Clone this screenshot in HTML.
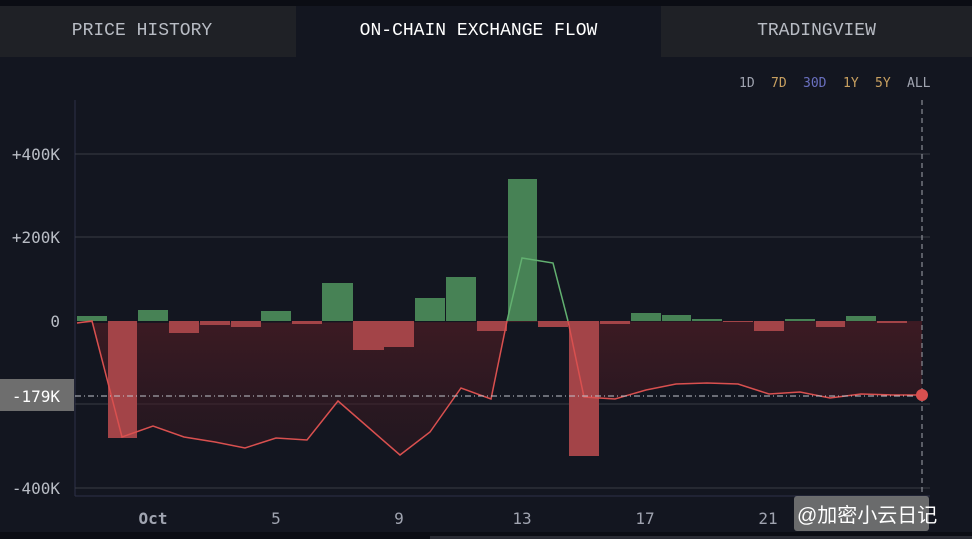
<!DOCTYPE html>
<html><head><style>
body{margin:0;width:972px;height:539px;background:#131620;overflow:hidden;font-family:"Liberation Mono","DejaVu Sans Mono",monospace;}
.tab{position:absolute;top:6px;height:51px;line-height:51px;text-align:center;font-size:18px;color:#b8bcc4;}
</style></head><body>
<div style="position:absolute;left:0;top:0;width:972px;height:6px;background:#0b0d14"></div>
<div class="tab" style="left:0;width:284px;background:#1f2126">PRICE HISTORY</div>
<div style="position:absolute;left:284px;top:6px;width:12px;height:51px;background:#1f2126"></div>
<div class="tab" style="left:296px;width:365px;background:#131620;color:#fff">ON-CHAIN EXCHANGE FLOW</div>
<div class="tab" style="left:661px;width:311px;background:#1f2126">TRADINGVIEW</div>
<svg width="972" height="539" style="position:absolute;left:0;top:0" font-family="DejaVu Sans Mono, Liberation Mono, monospace">
<defs><linearGradient id="g" x1="0" y1="321" x2="0" y2="460" gradientUnits="userSpaceOnUse"><stop offset="0" stop-color="#4a1c24" stop-opacity=".75"/><stop offset="1" stop-color="#3a1820" stop-opacity=".35"/></linearGradient></defs>
<g font-size="13" fill="#a0a4b0"><text x="739" y="87">1D</text><text x="771" y="87" fill="#c8a060">7D</text><text x="803" y="87" fill="#6a70c0">30D</text><text x="843" y="87" fill="#c8a060">1Y</text><text x="875" y="87" fill="#c8a060">5Y</text><text x="907" y="87">ALL</text></g>
<line x1="75" y1="100" x2="75" y2="496" stroke="#2c3048"/>
<line x1="75" y1="496" x2="930" y2="496" stroke="#2c3048"/>
<g stroke="#3a3c44"><line x1="75" y1="154" x2="930" y2="154"/><line x1="75" y1="237" x2="930" y2="237"/><line x1="75" y1="404" x2="930" y2="404"/><line x1="75" y1="488" x2="930" y2="488"/></g>
<g font-size="16" fill="#b8bcc4" text-anchor="end"><text x="60" y="160">+400K</text><text x="60" y="243">+200K</text><text x="60" y="327">0</text><text x="60" y="494">-400K</text></g>
<path d="M77,323 L92,321 L122,437 L153,426 L184,437 L215,442 L245,448 L276,438 L307,440 L338,401 L369,428 L400,455 L430,432 L461,388 L491,399 L507,321 L568,321 L584,397 L615,399 L646,390 L676,384 L707,383 L738,384 L769,394 L800,392 L830,398 L861,394 L892,395 L922,395 L922,321 Z" fill="url(#g)"/>
<g fill="#478255"><rect x="77" y="316" width="30" height="5"/><rect x="138" y="310" width="30" height="11"/><rect x="261" y="311" width="30" height="10"/><rect x="322" y="283" width="31" height="38"/><rect x="415" y="298" width="30" height="23"/><rect x="446" y="277" width="30" height="44"/><rect x="508" y="179" width="29" height="142"/><rect x="631" y="313" width="30" height="8"/><rect x="662" y="315" width="29" height="6"/><rect x="692" y="319" width="30" height="2"/><rect x="785" y="319" width="30" height="2"/><rect x="846" y="316" width="30" height="5"/></g>
<g fill="#a34448"><rect x="108" y="321" width="29" height="117"/><rect x="169" y="321" width="30" height="12"/><rect x="200" y="321" width="30" height="4"/><rect x="231" y="321" width="30" height="6"/><rect x="292" y="321" width="30" height="3"/><rect x="353" y="321" width="31" height="29"/><rect x="384" y="321" width="30" height="26"/><rect x="477" y="321" width="30" height="10"/><rect x="538" y="321" width="30" height="6"/><rect x="569" y="321" width="30" height="135"/><rect x="600" y="321" width="30" height="3"/><rect x="723" y="321" width="30" height="1"/><rect x="754" y="321" width="30" height="10"/><rect x="816" y="321" width="29" height="6"/><rect x="877" y="321" width="30" height="2"/></g>
<polyline fill="none" stroke="#d9504f" stroke-width="1.5" points="77,323 92,321 122,437 153,426 184,437 215,442 245,448 276,438 307,440 338,401 369,428 400,455 430,432 461,388 491,399 507,321"/>
<polyline fill="none" stroke="#62b070" stroke-width="1.5" points="507,321 522,258 553,263 568,321"/>
<polyline fill="none" stroke="#d9504f" stroke-width="1.5" points="568,321 584,397 615,399 646,390 676,384 707,383 738,384 769,394 800,392 830,398 861,394 892,395 922,395"/>
<line x1="75" y1="396" x2="922" y2="396" stroke="#c0c4cc" stroke-dasharray="6,3,1,3"/>
<line x1="922" y1="100" x2="922" y2="496" stroke="#a0a4ac" stroke-dasharray="5,4"/>
<circle cx="922" cy="395" r="6" fill="#d9504f"/>
<rect x="0" y="379" width="74" height="32" fill="#6e6e6e"/>
<text x="60" y="402" font-size="16" fill="#fff" text-anchor="end">-179K</text>
<g font-size="16" fill="#a0a4b0" text-anchor="middle"><text x="153" y="524" font-weight="bold">Oct</text><text x="276" y="524">5</text><text x="399" y="524">9</text><text x="522" y="524">13</text><text x="645" y="524">17</text><text x="768" y="524">21</text></g>
<rect x="794" y="496" width="135" height="35" rx="3" fill="#7a7a7a" opacity=".85"/>
<text x="797" y="522" font-size="20" fill="#fff" font-family="Liberation Sans, Noto Sans CJK SC, sans-serif">@加密小云日记</text>
<rect x="0" y="532" width="972" height="7" fill="#0b0d14"/>
<rect x="430" y="536" width="542" height="3" fill="#2a2c34"/>
</svg>
</body></html>
